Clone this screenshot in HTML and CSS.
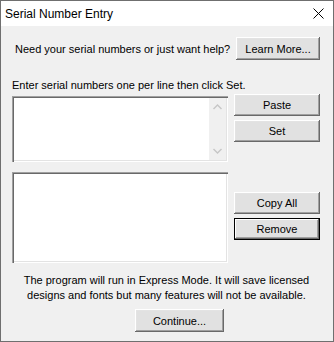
FILE: index.html
```html
<!DOCTYPE html>
<html>
<head>
    <title>Serial Number Entry</title>
    <link rel="stylesheet" href="styles.css">
</head>
<body>
    <div class="window">
        <div class="titlebar">
            <span class="title">Serial Number Entry</span>
            <svg class="close" width="11" height="11" viewBox="0 0 11 11">
                <path d="M0.5 0.5 L10.5 10.5 M10.5 0.5 L0.5 10.5" stroke="#000" stroke-width="1" fill="none"/>
            </svg>
        </div>

        <div class="content">
            <div class="help-row">
                <span>Need your serial numbers or just want help?</span>
                <button class="btn btn-learn">Learn More...</button>
            </div>

            <div class="label">Enter serial numbers one per line then click Set.</div>

            <div class="entry-row">
                <div class="field field-entry">
                    <div class="field-text"></div>
                    <div class="scrollbar">
                        <svg width="9" height="6" viewBox="0 0 9 6"><path d="M0.5 5 L4.5 1 L8.5 5" stroke="#c6c6c6" stroke-width="1.4" fill="none"/></svg>
                        <svg width="9" height="6" viewBox="0 0 9 6"><path d="M0.5 1 L4.5 5 L8.5 1" stroke="#c6c6c6" stroke-width="1.4" fill="none"/></svg>
                    </div>
                </div>
                <div class="side-buttons side-entry">
                    <button class="btn">Paste</button>
                    <button class="btn">Set</button>
                </div>
            </div>

            <div class="entry-row list-row">
                <div class="field field-list"></div>
                <div class="side-buttons side-list">
                    <button class="btn">Copy All</button>
                    <button class="btn btn-default">Remove</button>
                </div>
            </div>

            <p class="note">The program will run in Express Mode. It will save licensed<br>designs and fonts but many features will not be available.</p>

            <button class="btn btn-continue">Continue...</button>
        </div>
    </div>
</body>
</html>
```

FILE: styles.css
```css
body {
    margin: 0;
    padding: 0;
    font-family: "Liberation Sans", Arial, sans-serif;
    font-size: 11px;
    color: #000;
}

.window {
    width: 334px;
    height: 342px;
    box-sizing: border-box;
    border: 1px solid #6f6f6f;
    display: flex;
    flex-direction: column;
}

.titlebar {
    height: 25px;
    background-color: #fff;
    display: flex;
    align-items: center;
    justify-content: space-between;
    padding: 0 9px 0 4px;
}

    .titlebar .title {
        font-family: "Liberation Sans", Arial, sans-serif;
        font-size: 12px;
    }

.content {
    flex: 1;
    background-color: #f0f0f0;
    padding: 11px 12px 0 11px;
}

.btn {
    font-family: "Liberation Sans", Arial, sans-serif;
    font-size: 11px;
    color: #000;
    background-color: #e1e1e1;
    border: none;
    padding: 0;
    height: 22px;
    box-shadow: inset -1px -1px #696969, inset 1px 1px #fff, inset -2px -2px #a0a0a0, inset 2px 2px #e3e3e3;
}

.btn-default {
    box-shadow: inset 0 0 0 1px #000, inset -2px -2px #696969, inset 2px 2px #fff, inset -3px -3px #a0a0a0;
}

.help-row {
    display: flex;
    align-items: center;
    justify-content: space-between;
    padding-left: 3px;
    padding-right: 1px;
}

.btn-learn {
    width: 84px;
    height: 23px;
}

.label {
    margin-top: 19px;
    line-height: 13px;
}

.entry-row {
    display: flex;
    gap: 6px;
    margin-top: 4px;
}

.list-row {
    margin-top: 10px;
}

.field {
    width: 216px;
    box-sizing: border-box;
    background-color: #fff;
    box-shadow: inset 1px 1px #a0a0a0, inset 2px 2px #696969, inset -1px -1px #fff, inset -2px -2px #e3e3e3;
    padding: 2px;
}

.field-entry {
    height: 66px;
    display: flex;
}

    .field-entry .field-text {
        flex: 1;
    }

.field-list {
    height: 91px;
}

.scrollbar {
    width: 17px;
    background-color: #f0f0f0;
    display: flex;
    flex-direction: column;
    justify-content: space-between;
    align-items: center;
    padding: 6px 0;
}

.side-buttons {
    display: flex;
    flex-direction: column;
    gap: 4px;
}

    .side-buttons .btn {
        width: 86px;
    }

.side-entry {
    margin-top: -2px;
}

.side-list {
    margin-top: 20px;
}

.note {
    margin: 10px 0 0;
    text-align: center;
    line-height: 15px;
}

.btn-continue {
    display: block;
    margin: 6px 0 0 123px;
    width: 89px;
    height: 23px;
}
```
